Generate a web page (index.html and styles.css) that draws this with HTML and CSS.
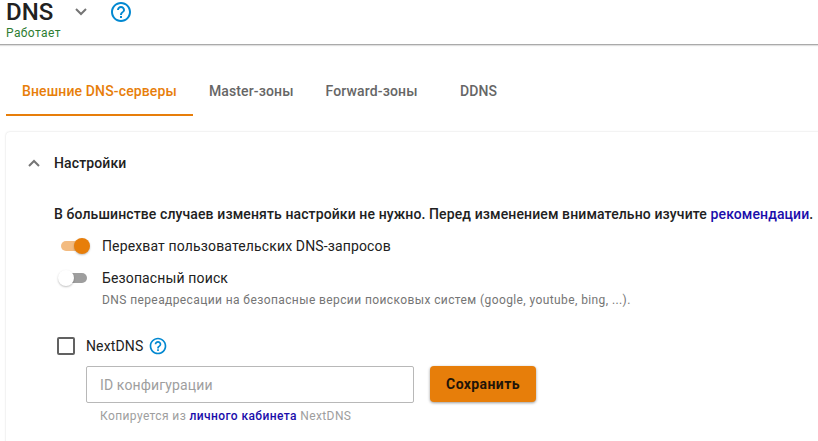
FILE: index.html
```html
<!DOCTYPE html>
<html lang="ru">
<head>
<meta charset="utf-8">
<title>DNS</title>
<link rel="stylesheet" href="styles.css">
</head>
<body>
<svg width="0" height="0" class="sprite">
  <symbol id="help" viewBox="0 0 24 24"><path d="M11 18h2v-2h-2v2zm1-16C6.48 2 2 6.48 2 12s4.480 10 10 10 10-4.480 10-10S17.520 2 12 2zm0 18c-4.410 0-8-3.590-8-8s3.590-8 8-8 8 3.590 8 8-3.590 8-8 8zm0-14c-2.210 0-4 1.790-4 4h2c0-1.100.9-2 2-2s2 .9 2 2c0 2-3 1.750-3 5h2c0-2.250 3-2.500 3-5 0-2.210-1.790-4-4-4z"/></symbol>
</svg>
<header class="header">
  <div class="heading">
    <h1 class="title">DNS</h1>
    <svg class="chevron-down" viewBox="0 0 12 8"><path d="M1 1l5 5 5-5"/></svg>
    <svg class="help help-large"><use href="#help"/></svg>
  </div>
  <div class="status">Работает</div>
</header>
<nav class="tabs">
  <a class="tab active">Внешние DNS-серверы</a>
  <a class="tab">Master-зоны</a>
  <a class="tab">Forward-зоны</a>
  <a class="tab">DDNS</a>
</nav>
<main class="card">
  <div class="card-head">
    <svg class="chevron-up" viewBox="0 0 12 8"><path d="M1 7l5-5 5 5"/></svg>
    <h2 class="card-title">Настройки</h2>
  </div>
  <div class="card-body">
    <p class="notice">В большинстве случаев изменять настройки не нужно. Перед изменением внимательно изучите <a class="link">рекомендации</a>.</p>
    <div class="row">
      <span class="toggle on"><span class="thumb"></span></span>
      <span>Перехват пользовательских DNS-запросов</span>
    </div>
    <div class="row">
      <span class="toggle"><span class="thumb"></span></span>
      <span>Безопасный поиск</span>
    </div>
    <p class="hint">DNS переадресации на безопасные версии поисковых систем (google, youtube, bing, ...).</p>
    <div class="check-row">
      <span class="checkbox"></span>
      <span>NextDNS</span>
      <svg class="help help-small"><use href="#help"/></svg>
    </div>
    <div class="form">
      <div class="field">ID конфигурации</div>
      <button class="save">Сохранить</button>
    </div>
    <p class="field-hint">Копируется из <a class="link">личного кабинета</a> NextDNS</p>
  </div>
</main>
</body>
</html>
```

FILE: styles.css
```css
* { box-sizing: border-box; }
body {
  margin: 0;
  height: 441px;
  overflow: hidden;
  display: flex;
  flex-direction: column;
  background: #fff;
  color: #212121;
  font: 14px/20px Roboto, sans-serif;
  letter-spacing: 0.135px;
}
h1, h2, p { margin: 0; }
.sprite { display: none; }
.header {
  height: 45px;
  flex: none;
  padding-left: 6px;
  border-bottom: 1px solid #aaa;
  box-shadow: 0 1px 1px rgba(0, 0, 0, 0.12);
}
.heading { display: flex; align-items: center; height: 24px; }
.title { width: 69px; font-size: 24px; line-height: 24px; font-weight: 500; letter-spacing: 0; }
.chevron-down, .chevron-up { width: 12px; height: 8px; fill: none; stroke: #757575; stroke-width: 2; }
.help { fill: #0288d1; }
.help-large { width: 24px; height: 24px; margin-left: 22px; }
.status { height: 18px; font-size: 12px; line-height: 18px; letter-spacing: 0.4px; color: #2e7d32; }
.tabs { display: flex; flex: none; margin: 22px 0 0 6px; height: 49px; }
.tab {
  min-width: 90px;
  padding: 0 16px;
  text-align: center;
  line-height: 48px;
  font-weight: 500;
  color: #666;
}
.tab.active { color: #e77e0a; border-bottom: 2px solid #e77e0a; }
.card {
  flex: none;
  width: 832px;
  height: 330px;
  margin: 16px 0 0 6px;
  border-radius: 4px;
  box-shadow: 0 0 2px rgba(0, 0, 0, 0.18);
}
.card-head { display: flex; align-items: center; gap: 14px; height: 62px; padding-left: 22px; }
.card-title { font-size: 14px; font-weight: 500; }
.card-body { padding: 10px 0 0 48px; }
.notice { font-weight: 500; white-space: nowrap; margin-bottom: 6px; letter-spacing: 0.115px; }
.link { color: #1a0dab; font-weight: 500; }
.row { display: flex; align-items: center; height: 32px; gap: 13px; padding-left: 7px; }
.toggle { display: flex; align-items: center; width: 28px; height: 10px; border-radius: 5px; background: #9e9e9e; }
.toggle:not(.on) { width: 26px; margin-right: 2px; }
.toggle.on { justify-content: flex-end; background: #f3bb80; }
.thumb { flex: none; width: 16px; height: 16px; margin-left: -3px; border-radius: 50%; background: #fff; box-shadow: 0 1px 2px rgba(0, 0, 0, 0.25); }
.on .thumb { margin-right: -1px; background: #e77e0a; }
.hint { padding-left: 48px; font-size: 12px; line-height: 12px; letter-spacing: 0.4px; color: #757575; }
.check-row { display: flex; align-items: center; height: 24px; margin-top: 28px; padding-left: 3px; }
.checkbox { width: 18px; height: 18px; margin-right: 11px; border: 2px solid #616161; border-radius: 2px; }
.help-small { width: 20px; height: 20px; margin-left: 5px; }
.form { display: flex; gap: 16px; margin: 8px 0 0 32px; }
.field { width: 328px; height: 37px; padding-left: 13px; border: 1px solid #b8b8b8; border-radius: 2px; line-height: 36px; color: #9e9e9e; }
.save {
  width: 106px;
  height: 36px;
  padding: 0;
  border: 0;
  border-radius: 4px;
  background: #e77e0a;
  color: #1f1408;
  font: 700 14px/36px Roboto, sans-serif;
  letter-spacing: 0.4px;
  box-shadow: 0 1px 3px rgba(0, 0, 0, 0.4);
}
.field-hint { margin: 4px 0 0 46px; font-size: 12px; line-height: 18px; letter-spacing: 0.4px; color: #9e9e9e; }
```
